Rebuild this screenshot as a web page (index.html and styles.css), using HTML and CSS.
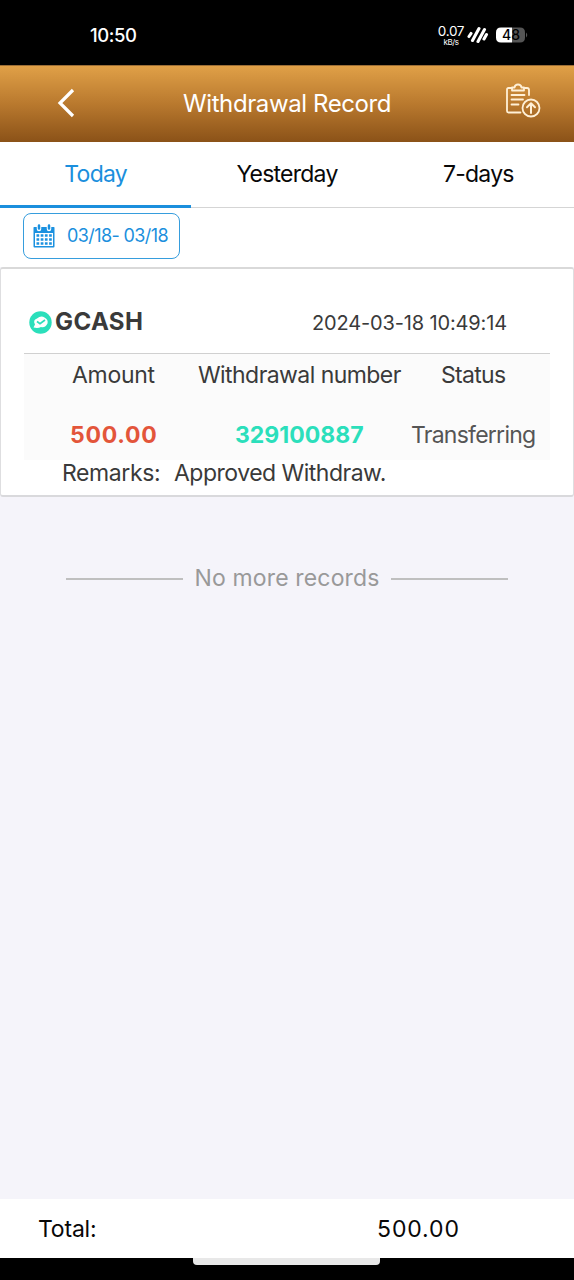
FILE: index.html
```html
<!DOCTYPE html>
<html lang="en">
<head>
<meta charset="utf-8">
<title>Withdrawal Record</title>
<link rel="stylesheet" href="styles.css">
</head>
<body>
<div class="statusbar">
  <span class="clock">10:50</span>
  <div class="speed"><span class="rate">0.07</span><span class="unit">kB/s</span></div>
  <svg class="signal" width="22" height="18" viewBox="0 0 22 18"><path d="M2 10.500 4 7.500M5.500 14.500 12 2.500M11 15.500 17.500 3.500M17 13 19.500 8.500" stroke="#fff" stroke-width="3.100" stroke-linecap="round"/></svg>
  <svg class="battery" width="33" height="16" viewBox="0 0 33 16"><path d="M5 .5H16V15.500H5Q0 15.500 0 10.500V5.500Q0 .500 5 .500Z" fill="#fff"/><path d="M16 .500H24Q29 .500 29 5.500V10.500Q29 15.500 24 15.500H16Z" fill="#555"/><path d="M30 5.500Q32.500 8 30 10.500Z" fill="#555"/><text x="15" y="12.800" text-anchor="middle" class="level">48</text></svg>
</div>
<header class="header">
  <svg class="back" width="18" height="30" viewBox="0 0 18 30"><path d="M16 2 3 15 16 28" fill="none" stroke="#fff" stroke-width="3.200"/></svg>
  <h1 class="title">Withdrawal Record</h1>
  <svg class="records" width="36" height="36" viewBox="0 0 36 36" fill="none" stroke="#fff0d6" stroke-width="1.800" stroke-linecap="round" stroke-linejoin="round"><path d="M7 5H3.500Q2 5 2 6.500V28Q2 29.500 3.500 29.500H15.500M19.500 5H22Q24 5 24 7V12"/><path d="M7 7.500V4.500H9.500Q10 1.500 13 1.500T16.500 4.500H19V7.500Z"/><path d="M6.500 12H19.500M6.500 16.500H18M6.500 21.500H13.500"/><circle cx="26" cy="25" r="8.500"/><path d="M26 30V20.500M22 24.200 26 20.300 30 24.200" stroke-width="2"/></svg>
</header>
<nav class="tabs">
  <a class="tab active"><span>Today</span></a>
  <a class="tab"><span>Yesterday</span></a>
  <a class="tab"><span>7-days</span></a>
</nav>
<div class="filter">
  <div class="range">
    <svg width="22" height="24" viewBox="0 0 22 24"><path fill="#1b91e0" fill-rule="evenodd" d="M1 3H21Q21.500 3 21.500 4V22.500Q21.500 23.500 20.500 23.500H1.500Q.500 23.500 .500 22.500V4Q.500 3 1 3ZM2 9V22H20V9Z"/><path d="M6 2V5M16 2V5" stroke="#fff" stroke-width="4.500" stroke-linecap="round"/><path d="M6 1.500V4.500M16 1.500V4.500" stroke="#1b91e0" stroke-width="2.500" stroke-linecap="round"/><path d="M3.500 11.500H19M3.500 15.500H19M3.500 19.500H19" stroke="#1b91e0" stroke-width="2.500" stroke-dasharray="2.700 1.500"/></svg>
    <span class="dates">03/18- 03/18</span>
  </div>
</div>
<main class="list">
  <section class="card">
    <div class="cardhead">
      <svg width="23" height="23" viewBox="0 0 23 23"><circle cx="11.500" cy="11.500" r="11.200" fill="#2bdfbb"/><path d="M4.500 16.500 6 13.500Q3.500 9 8 7.500Q12 4 15.500 6.500Q19.500 8.500 18.500 12.500Q16.500 17 12 16Q9 17.500 4.500 16.500Z" fill="#fff"/><path d="M8 10.500 11 12.700 16 9" fill="none" stroke="#2bdfbb" stroke-width="1.700"/></svg>
      <span class="method">GCASH</span>
      <time class="time">2024-03-18 10:49:14</time>
    </div>
    <div class="grid">
      <span class="l-amount">Amount</span><span class="l-number">Withdrawal number</span><span class="l-status">Status</span>
      <b class="amount">500.00</b><b class="number">329100887</b><span class="status">Transferring</span>
    </div>
    <div class="remarks"><span class="r-label">Remarks</span><span class="colon">:</span><span class="r-text">Approved Withdraw.</span></div>
  </section>
  <div class="end"><i class="rule"></i><span class="nomore">No more records</span><i class="rule"></i></div>
</main>
<footer class="total"><span class="total-label">Total:</span><span class="total-value">500.00</span></footer>
<div class="navbar"><div class="handle"></div></div>
</body>
</html>
```
FILE: styles.css
```css
* { box-sizing: border-box; }
body { margin: 0; width: 574px; height: 1280px; display: flex; flex-direction: column; overflow: hidden; background: #f5f4fa; color: #3a3a3a; font: 400 23px/30px Inter, "Noto Sans", sans-serif; white-space: nowrap; }
svg { display: block; flex: none; }
.statusbar { height: 65px; background: #000; color: #fff; display: flex; align-items: center; padding: 4px 0 0 90px; }
.clock { width: 348px; font-size: 18.500px; font-weight: 500; letter-spacing: -.4px; }
.speed { width: 26px; display: flex; flex-direction: column; align-items: center; padding-top: 1px; }
.rate { font-size: 13.500px; line-height: 14px; height: 14px; letter-spacing: -.3px; }
.unit { font-size: 8px; line-height: 8px; letter-spacing: -.4px; }
.signal { margin-left: 3px; }
.battery { margin-left: 7px; }
.level { font: 500 14px Inter, sans-serif; fill: #000; }
.header { height: 76.500px; display: flex; align-items: center; padding-left: 57px; background: linear-gradient(#e0a047, #b9792e 50%, #8b5218); border-top: 1px solid #9b6d35; }
.back { margin-top: -1px; }
.title { margin: 0; width: 323px; padding-left: 108px; font-size: 24px; font-weight: 400; color: #fff; flex: none; letter-spacing: -.4px; }
.records { margin: -6px 0 0 107px; }
.tabs { height: 66.500px; display: flex; background: #fff; color: #080808; font-size: 23px; letter-spacing: -.75px; }
.tab { flex: 1; display: flex; justify-content: center; align-items: center; border-bottom: 1px solid #d5d5d5; padding-bottom: 1px; }
.active { color: #1b8fdd; border-bottom: 3px solid #1b8fdd; padding: 1px 0 0; }
.filter { height: 59px; background: #fff; padding: 5px 0 0 23px; }
.range { width: 157px; height: 46px; border: 1px solid #369ddd; border-radius: 8px; display: flex; align-items: center; padding-left: 9px; color: #1b8fdd; }
.dates { margin-left: 12px; font-size: 18px; letter-spacing: -.6px; }
.list { flex: 1; }
.card { height: 230px; background: #fff; border: 1px solid #dedee0; border-top: 2px solid #d9d9d9; border-bottom: 2px solid #d9d9dc; border-radius: 3px; padding: 23px 23px 0; }
.cardhead { height: 62px; display: flex; align-items: center; border-bottom: 1px solid #d0d0d0; padding-left: 5px; }
.method { width: 260px; padding: 0 0 1px 3px; font-weight: 700; font-size: 24px; letter-spacing: .4px; }
.time { font-size: 20px; letter-spacing: -.15px; }
.grid { height: 106px; display: grid; grid-template-columns: 174px 203px 1fr; grid-template-rows: 42px 1fr; align-items: center; background: #fbfbfb; }
.l-amount { padding-left: 48px; letter-spacing: -.3px; }
.l-number { letter-spacing: -.56px; }
.l-status { padding-left: 40px; letter-spacing: -.7px; }
.amount, .number { font-size: 23px; padding-top: 13px; font-weight: 700; }
.amount { color: #e3553a; padding-left: 46px; letter-spacing: .75px; }
.number { color: #2bdfbb; padding-left: 37px; }
.status { color: #555; padding: 13px 0 0 10px; letter-spacing: -.75px; }
.remarks { display: flex; padding-left: 38px; height: 26px; line-height: 26px; letter-spacing: -.5px; }
.r-label { width: 92px; letter-spacing: -.4px; }
.colon { width: 20px; }
.end { display: flex; align-items: center; justify-content: space-between; padding: 0 66px; margin-top: 66px; color: #999; }
.nomore { letter-spacing: .15px; }
.rule { width: 117px; height: 2px; background: #bfbfbf; margin-top: 2px; }
.total { height: 59px; background: #fff; color: #080808; display: flex; align-items: center; padding-left: 38px; }
.total-label { width: 339px; letter-spacing: -.2px; }
.total-value { letter-spacing: .9px; }
.navbar { height: 22px; background: #000; }
.handle { width: 187px; height: 7px; margin-left: 193px; background: #e8e8e8; border-radius: 0 0 4px 4px; }
```
